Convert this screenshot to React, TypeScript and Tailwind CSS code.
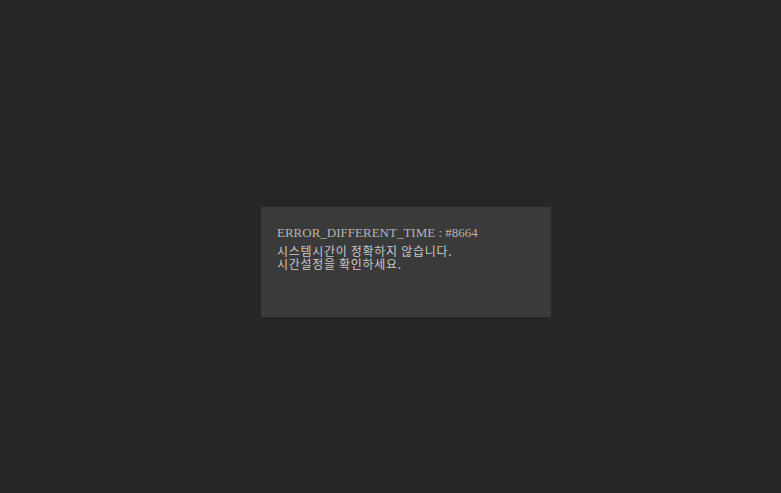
export default function App() {
    return (
        <div className="flex h-[493px] w-full items-center justify-center bg-[#272727] pl-[31px] pt-[31px]">
            <div className="h-[110px] w-[290px] bg-[#3a3a3a] px-4 pt-[18px]">
                <p className="text-[13px] leading-[16px] text-[#b4b4b4]" style={{ fontFamily: '"Liberation Serif", serif' }}>
                    ERROR_DIFFERENT_TIME : #8664
                </p>
                <p
                    className="mt-[3px] text-[12px] leading-[13px] tracking-[0.7px] text-[#c8c8c8]"
                    style={{ fontFamily: '"Noto Sans CJK KR", sans-serif' }}
                >
                    시스템시간이 정확하지 않습니다.
                    <br />
                    시간설정을 확인하세요.
                </p>
            </div>
        </div>
    );
}
